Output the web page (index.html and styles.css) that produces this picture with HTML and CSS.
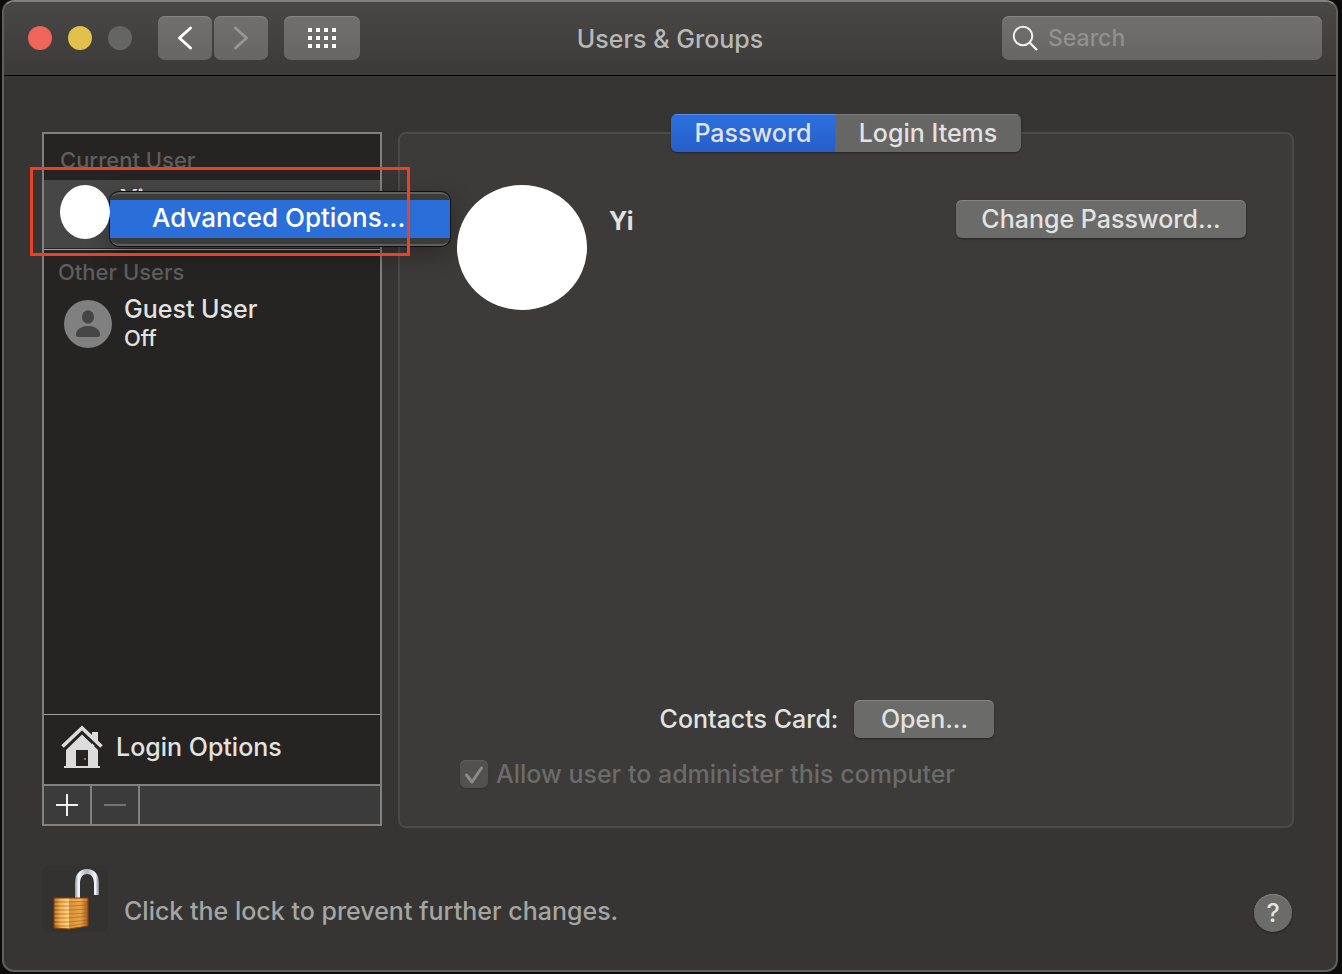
FILE: index.html
```html
<!DOCTYPE html>
<html lang="en">
<head>
<meta charset="utf-8">
<title>Users &amp; Groups</title>
<link rel="stylesheet" href="styles.css">
</head>
<body>
<div class="window">
  <header class="titlebar">
    <div class="titlebar-left">
      <div class="lights">
        <button class="light light-close" aria-label="Close"></button>
        <button class="light light-minimize" aria-label="Minimize"></button>
        <button class="light light-zoom" aria-label="Zoom" disabled></button>
      </div>
      <div class="nav">
        <button class="tool" aria-label="Back">
          <svg width="54" height="44" viewBox="0 0 54 44"><path d="M32.500 12 21.500 22l11 10" fill="none" stroke="#fff" stroke-width="3" stroke-linecap="round" stroke-linejoin="round"/></svg>
        </button>
        <button class="tool" aria-label="Forward" disabled>
          <svg width="54" height="44" viewBox="0 0 54 44"><path d="M21.500 12l11 10-11 10" fill="none" stroke="#969694" stroke-width="3" stroke-linecap="round" stroke-linejoin="round"/></svg>
        </button>
      </div>
      <button class="tool tool-wide" aria-label="Show all">
        <svg width="76" height="44" viewBox="0 0 76 44" fill="#fff"><path d="M24 12h4v4h-4zM32 12h4v4h-4zM40 12h4v4h-4zM48 12h4v4h-4zM24 20h4v4h-4zM32 20h4v4h-4zM40 20h4v4h-4zM48 20h4v4h-4zM24 28h4v4h-4zM32 28h4v4h-4zM40 28h4v4h-4zM48 28h4v4h-4z"/></svg>
      </button>
    </div>
    <h1 class="title">Users &amp; Groups</h1>
    <label class="search">
      <svg width="26" height="26" viewBox="0 0 26 26" fill="none" stroke="#f0f0ef" stroke-width="2"><circle cx="11" cy="11" r="9.300"/><path d="M17.500 17.500 25 25" stroke-width="2.400"/></svg>
      <input class="search-input" type="search" placeholder="Search" aria-label="Search">
    </label>
  </header>

  <main class="content">
    <aside class="sidebar">
      <h2 class="group group-current">Current User</h2>
      <div class="user user-selected">
        <span class="avatar avatar-small"></span>
        <span class="user-name user-name-bold">Yi</span>
        <div class="menu" role="menu">
          <button class="menu-item" role="menuitem">Advanced Options...</button>
        </div>
        <div class="highlight"></div>
      </div>
      <h2 class="group group-other">Other Users</h2>
      <div class="user user-guest">
        <svg class="guest-icon" width="48" height="48" viewBox="0 0 48 48"><circle cx="24" cy="24" r="24" fill="#808080"/><ellipse cx="24" cy="17" rx="6" ry="6.700" fill="#454545"/><path d="M12 34.500C12 29 18 26 24 26s12 3 12 8.500c0 1.500-.8 2.500-2 2.500H14c-1.200 0-2-1-2-2.500z" fill="#454545"/></svg>
        <div class="user-text">
          <span class="user-name">Guest User</span>
          <span class="user-status">Off</span>
        </div>
      </div>
      <button class="login-options">
        <svg width="42" height="44" viewBox="0 0 42 44" fill="#dcdcdc"><path d="M31 7h6v14h-6z"/><path d="M21 9.500 5 25v16H3v2h36v-2h-2V25zM15 25h12v16H15z" fill-rule="evenodd"/><path d="M2 22 21 4l19 18" fill="none" stroke="#252422" stroke-width="7"/><path d="M31 7h6v10l-6-6z"/><path d="M1.500 21.500 21 3l19.500 18.500" fill="none" stroke="#dcdcdc" stroke-width="3.600"/><path d="M23 33h2v2h-2z" fill="#777"/></svg>
        Login Options
      </button>
      <div class="actions">
        <button class="action" aria-label="Add user"><svg width="22" height="22" viewBox="0 0 22 22"><path d="M0 11h22M11 0v22" stroke="#f0f0f0" stroke-width="2"/></svg></button>
        <button class="action" aria-label="Remove user" disabled><svg width="22" height="22" viewBox="0 0 22 22"><path d="M0 11h22" stroke="#727272" stroke-width="2"/></svg></button>
      </div>
    </aside>

    <section class="panel">
      <div class="tabs" role="tablist">
        <button class="tab tab-active" role="tab" aria-selected="true">Password</button>
        <button class="tab" role="tab" aria-selected="false">Login Items</button>
      </div>
      <div class="profile">
        <span class="avatar avatar-large"></span>
        <h2 class="profile-name">Yi</h2>
        <button class="push push-password">Change Password...</button>
      </div>
      <div class="contacts">
        <label for="open-card">Contacts Card:</label>
        <button class="push push-open" id="open-card">Open...</button>
      </div>
      <label class="admin">
        <span class="check">
          <input class="check-box" type="checkbox" checked disabled>
          <svg class="check-mark" width="28" height="28" viewBox="0 0 28 28"><path d="M6.500 15l5.500 7L21.500 8" fill="none" stroke="#8b8b89" stroke-width="3" stroke-linecap="round" stroke-linejoin="round"/></svg>
        </span>
        Allow user to administer this computer
      </label>
    </section>
  </main>

  <footer class="footer">
    <button class="lock" aria-label="Lock">
      <svg width="66" height="66" viewBox="0 0 66 66">
        <defs>
          <linearGradient id="steel" x1="0" x2="1"><stop offset="0" stop-color="#8d9aa3"/><stop offset=".15" stop-color="#f4f8fa"/><stop offset=".5" stop-color="#a9b4bb"/><stop offset=".85" stop-color="#f4f8fa"/><stop offset="1" stop-color="#78858e"/></linearGradient>
          <linearGradient id="brass-left" x1="0" x2="1"><stop offset="0" stop-color="#a65d12"/><stop offset=".4" stop-color="#e9a545"/><stop offset="1" stop-color="#ffd080"/></linearGradient>
          <linearGradient id="brass-right" x1="0" x2="1"><stop offset="0" stop-color="#d99237"/><stop offset=".6" stop-color="#e8a34a"/><stop offset="1" stop-color="#a65c16"/></linearGradient>
        </defs>
        <path d="M33 32V17C33 8 38 3 45 3s12 5 12 14v12h-5V18c0-7-3-10-7-10s-7 3-7 10v14z" fill="url(#steel)"/>
        <path d="M12 32h15v31l-15-1z" fill="url(#brass-left)"/>
        <path d="M27 32h19v28l-19 3z" fill="url(#brass-right)"/>
        <path d="M12 36h15l19-1M12 40h15l19-1M12 44h15l19-1M12 48h15l19-1M12 52h15l19-2M12 56h15l19-2M12 60h15l19-3" fill="none" stroke="#8a4708" stroke-opacity=".4" stroke-width="1.200"/>
        <path d="M12 34h34M12 38h15M12 42h15M12 46h15M12 50h15M12 54h15M12 58h15" stroke="#ffe2a0" stroke-opacity=".45"/>
        <path d="M12 32h34v28l-19 3-15-1z" fill="none" stroke="#874509" stroke-width="1"/>
      </svg>
    </button>
    <p class="lock-text">Click the lock to prevent further changes.</p>
    <button class="help" aria-label="Help">?</button>
  </footer>
</div>
</body>
</html>
```

FILE: styles.css
```css
* {
  box-sizing: border-box;
}

body {
  margin: 0;
  background: #0c0c0c;
  color: #e2e2e1;
  font-family: Inter, "Liberation Sans", sans-serif;
  font-size: 25px;
  font-weight: 500;
  line-height: 32px;
}

h1, h2, p {
  margin: 0;
  font-size: inherit;
  font-weight: inherit;
}

button, input {
  margin: 0;
  padding: 0;
  border: 0;
  background: none;
  color: inherit;
  font: inherit;
}

svg {
  display: block;
}

.window {
  display: flex;
  flex-direction: column;
  min-height: calc(100vh - 2px);
  margin: 0 4px 2px 2px;
  border: 2px solid #5f5f5e;
  border-top-color: #80807e;
  border-radius: 12px;
  background: #363533;
}

.titlebar {
  display: grid;
  grid-template-columns: 1fr auto 1fr;
  align-items: center;
  padding: 14px 14px 15px;
  border-bottom: 1px solid #000;
  border-radius: 10px 10px 0 0;
  background: linear-gradient(#494846, #3b3a38);
}

.titlebar-left {
  display: flex;
  align-items: center;
  gap: 16px;
  padding-left: 10px;
}

.lights {
  display: flex;
  gap: 16px;
  margin-right: 10px;
}

.light {
  width: 24px;
  height: 24px;
  border-radius: 50%;
}

.light-close { background: #ef6559; }
.light-minimize { background: #e1c04c; }
.light-zoom { background: #656563; }

.nav {
  display: flex;
  gap: 2px;
}

.tool {
  width: 54px;
  height: 44px;
  border-radius: 7px;
  background: linear-gradient(#71706e, #676664);
  box-shadow: inset 0 1px #858482;
}

.tool-wide {
  width: 76px;
}

.title {
  padding-top: 2px;
  color: #b8b8b6;
}

.search {
  display: flex;
  align-items: center;
  justify-self: end;
  gap: 10px;
  width: 320px;
  height: 44px;
  padding: 0 10px;
  border-radius: 7px;
  background: linear-gradient(#71706e, #676664);
  box-shadow: inset 0 1px #858482;
}

.search-input {
  flex: 1;
  min-width: 0;
  outline: 0;
  font-size: 23px;
}

.search-input::placeholder {
  color: #91918f;
}

.content {
  display: flex;
  flex: 1;
  gap: 16px;
  padding: 56px 42px 0 38px;
}

.sidebar {
  display: flex;
  flex: 0 0 340px;
  flex-direction: column;
  margin-bottom: 2px;
  border: 2px solid #80807f;
  background: #252422;
}

.group {
  color: #5e5e5c;
  font-size: 22px;
  line-height: 28px;
}

.group-current {
  padding: 12px 16px 6px;
}

.group-other {
  padding: 8px 14px 6px;
}

.user {
  display: flex;
}

.user-selected {
  position: relative;
  height: 70px;
  padding: 5px 16px 0;
  gap: 10px;
  border-bottom: 1px solid #a0a09f;
  background: linear-gradient(#464646 68px, #252422 68px);
}

.user-guest {
  gap: 12px;
  padding: 0 20px;
}

.guest-icon {
  flex: none;
  margin-top: 8px;
}

.user-text {
  display: flex;
  flex-direction: column;
  padding-top: 1px;
}

.user-status {
  font-size: 22px;
  line-height: 26px;
}

.user-name-bold {
  line-height: 28px;
  font-weight: 600;
}

.avatar {
  position: relative;
  z-index: 2;
  flex: none;
  border-radius: 50%;
  background: #fff;
}

.avatar-small {
  width: 50px;
  height: 54px;
}

.avatar-large {
  width: 130px;
  height: 125px;
}

.menu {
  position: absolute;
  z-index: 1;
  top: 12px;
  left: 66px;
  width: 340px;
  padding: 6px 0;
  border: solid #5e5e5d;
  border-width: 2px 0;
  border-radius: 9px;
  background: #3b3b3a;
  box-shadow: 0 0 0 1px #101010, 0 8px 24px rgba(0, 0, 0, 0.3);
}

.menu-item {
  display: block;
  width: 100%;
  height: 38px;
  padding: 0 0 2px 42px;
  background: #2a6fd9;
  color: #fff;
  font-size: 26px;
  text-align: left;
}

.highlight {
  position: absolute;
  z-index: 2;
  top: -13px;
  left: -14px;
  width: 380px;
  height: 89px;
  border: 3px solid #ed4024;
  pointer-events: none;
}

.login-options {
  display: flex;
  align-items: center;
  gap: 13px;
  height: 70px;
  margin-top: auto;
  padding: 0 17px 6px;
  border-top: 1px solid #a0a09f;
}

.actions {
  display: flex;
  border-top: 2px solid #80807f;
  background: #3b3b3b;
}

.action {
  display: grid;
  place-items: center;
  width: 48px;
  height: 38px;
  border-right: 2px solid #80807f;
}

.panel {
  display: flex;
  flex: 1;
  flex-direction: column;
  min-width: 0;
  border: 2px solid #4a4a48;
  border-radius: 8px;
  background: #3c3b39;
}

.tabs {
  display: flex;
  align-self: center;
  margin-top: -20px;
  border-radius: 6px;
  overflow: hidden;
  box-shadow: 0 1px 2px rgba(0, 0, 0, 0.4);
}

.tab {
  width: 186px;
  height: 38px;
  background: #666664;
  box-shadow: inset 0 1px #7b7b79;
}

.tab-active {
  width: 164px;
  background: linear-gradient(#2d6fe0, #265fc8);
  box-shadow: inset 0 1px #5c8fe5;
}

.profile {
  display: flex;
  align-items: flex-start;
  margin-top: 33px;
  padding: 0 46px 0 57px;
}

.profile-name {
  margin: 20px 0 0 22px;
  font-weight: 700;
}

.push {
  height: 38px;
  border-radius: 6px;
  background: #6b6b69;
  box-shadow: inset 0 1px #858482, 0 1px 2px rgba(0, 0, 0, 0.4);
}

.push-password {
  width: 290px;
  margin: 15px 0 0 auto;
}

.push-open {
  width: 140px;
}

.contacts {
  display: flex;
  align-items: center;
  justify-content: center;
  gap: 16px;
  margin-top: auto;
  padding-right: 38px;
}

.admin {
  display: flex;
  align-items: center;
  gap: 8px;
  margin-top: 20px;
  padding: 0 46px 36px 60px;
  color: #6b6b69;
}

.check {
  display: grid;
}

.check-box,
.check-mark {
  grid-area: 1 / 1;
}

.check-box {
  width: 28px;
  height: 28px;
  border-radius: 6px;
  background: #52514f;
  box-shadow: inset 0 1px #5e5e5c, 0 1px 1px rgba(0, 0, 0, 0.2);
  appearance: none;
}

.footer {
  display: flex;
  align-items: flex-end;
  padding: 38px 44px 38px 38px;
}

.lock {
  width: 66px;
  height: 66px;
  border-radius: 8px;
  background: #333230;
}

.lock-text {
  margin: 0 auto 5px 16px;
  color: #a5a5a3;
}

.help {
  width: 38px;
  height: 38px;
  border-radius: 50%;
  background: #6b6b69;
  box-shadow: inset 0 1px #858482, 0 1px 2px rgba(0, 0, 0, 0.4);
}
```
